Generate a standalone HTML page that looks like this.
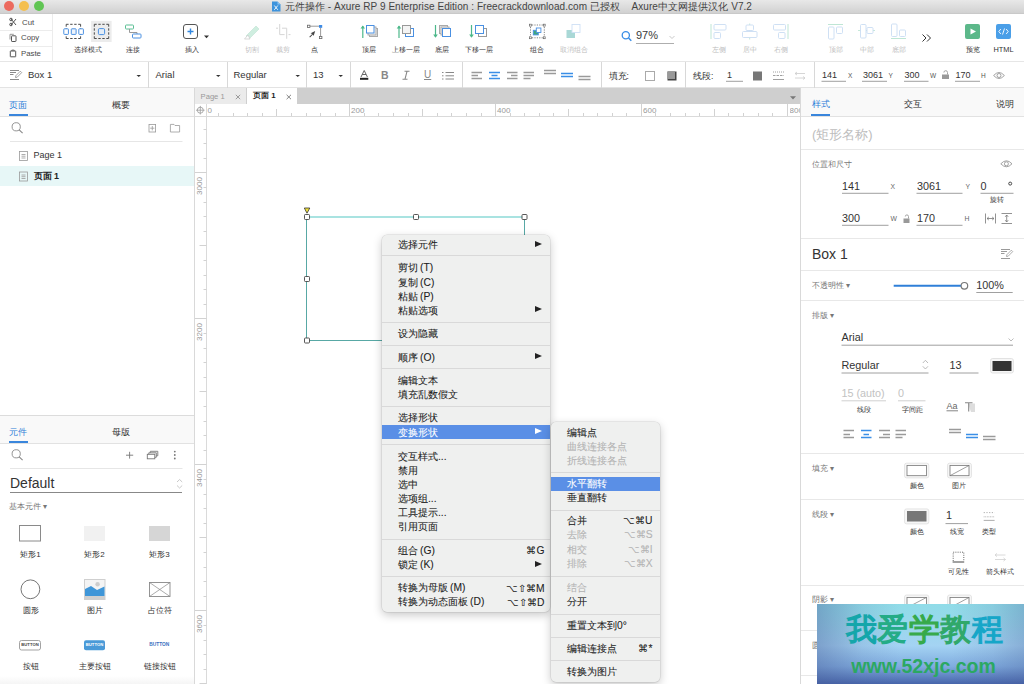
<!DOCTYPE html>
<html><head><meta charset="utf-8">
<style>
*{margin:0;padding:0;box-sizing:border-box}
html,body{width:1024px;height:684px;overflow:hidden;background:#fff}
body{position:relative;font-family:"Liberation Sans",sans-serif;color:#333}
.a{position:absolute}
.t{position:absolute;white-space:nowrap;line-height:1}
.hl{position:absolute;height:1px}
.vl{position:absolute;width:1px}
.lbl{position:absolute;white-space:nowrap;line-height:1;font-size:7.4px;color:#333;transform:translateX(-50%)}
.dis{color:#bdbdbd}
.rn{font-size:10.8px;color:#333}
.rs{font-size:6.8px;color:#666}
.mi{position:absolute;white-space:nowrap;line-height:14px;height:14px;font-size:10.3px;color:#222;-webkit-text-stroke:0.08px currentColor}
.arr{position:absolute;width:0;height:0;border-left:7px solid #222;border-top:3.8px solid transparent;border-bottom:3.8px solid transparent}
</style></head><body>

<!-- TITLE BAR -->
<div class="a" style="left:0;top:0;width:1024px;height:14px;background:linear-gradient(#e8e8e8,#d1d1d1);border-bottom:1px solid #c9c9c9"></div>
<div class="a" style="left:4px;top:1px;width:10px;height:10px;border-radius:50%;background:#ec6a5e"></div>
<div class="a" style="left:19px;top:1px;width:10px;height:10px;border-radius:50%;background:#f4bf4f"></div>
<div class="a" style="left:34px;top:1px;width:10px;height:10px;border-radius:50%;background:#61c554"></div>
<svg class="a" style="left:271px;top:1px" width="10" height="11" viewBox="0 0 10 11"><path d="M1 0.5 H6.5 L9.5 3.5 V10.5 H1 Z" fill="#3d93dc"/><path d="M6.5 0.5 V3.5 H9.5" fill="#8cc2ee"/><path d="M3.3 4.5 L6.8 8.8 M6.8 4.5 L3.3 8.8" stroke="#fff" stroke-width="0.9"/></svg>
<div class="t" style="left:284.7px;top:1.5px;font-size:10px;letter-spacing:0.06px;color:#444">元件操作 - Axure RP 9 Enterprise Edition : Freecrackdownload.com 已授权 &nbsp; &nbsp;Axure中文网提供汉化 V7.2</div>

<!-- TOOLBAR -->
<div class="a" style="left:0;top:14px;width:1024px;height:48px;background:#fff;border-bottom:1px solid #e6e6e6"></div>
<div class="vl" style="left:52px;top:14px;height:48px;background:#ececec"></div>
<div class="hl" style="left:0;top:30px;width:52px;background:#ececec"></div>
<div class="hl" style="left:0;top:46px;width:52px;background:#ececec"></div>
<div class="t" style="left:22px;top:18.5px;font-size:7.8px;color:#4a4a4a">Cut</div>
<div class="t" style="left:21px;top:33.8px;font-size:7.8px;color:#4a4a4a">Copy</div>
<div class="t" style="left:21px;top:50px;font-size:7.8px;color:#4a4a4a">Paste</div>


<!-- toolbar icons -->
<svg class="a" style="left:0;top:0" width="1024" height="90" viewBox="0 0 1024 90" fill="none">
 <!-- scissors -->
 <g stroke="#555" stroke-width="1">
  <path d="M11 19 L16 25 M16 19 L11 25"/>
  <circle cx="11" cy="24.5" r="1.3"/><circle cx="11" cy="19.5" r="1.3"/>
 </g>
 <!-- copy -->
 <g stroke="#555" stroke-width="1">
  <rect x="11.5" y="35.8" width="4.5" height="5.7" rx="0.6"/>
  <path d="M10 39.5 V34.3 H13.8" stroke="#999"/>
 </g>
 <!-- paste -->
 <g stroke="#555" stroke-width="1">
  <rect x="10.3" y="51" width="5.4" height="5.8" rx="0.3"/>
  <path d="M11.8 51 v-0.9 h2.4 v0.9" stroke-width="0.8"/>
 </g>
 <!-- select mode 1 -->
 <g stroke="#4a4a4a" stroke-width="1" stroke-dasharray="2.4 1.6">
  <path d="M66.2 24.3 H80.6 M66.2 38.5 H80.6 M66.2 24.3 V38.5 M80.6 24.3 V38.5"/>
 </g>
 <g stroke="#4a90e2" stroke-width="1" fill="#fff">
  <rect x="63.8" y="28.8" width="4.6" height="5.6" rx="0.6"/>
  <rect x="71.3" y="28.8" width="4.8" height="5.6" rx="0.6" fill="#eef4fb"/>
  <rect x="78.8" y="28.8" width="4.6" height="5.6" rx="0.6"/>
 </g>
 <!-- select mode 2 selected -->
 <rect x="91.1" y="20.9" width="20.5" height="21.1" fill="#ececec"/>
 <g stroke="#4a4a4a" stroke-width="1" stroke-dasharray="2.4 1.6">
  <path d="M94.3 24.3 H108.7 M94.3 38.5 H108.7 M94.3 24.3 V38.5 M108.7 24.3 V38.5"/>
 </g>
 <rect x="98.4" y="28.6" width="6.2" height="6" rx="1.2" stroke="#4a90e2" fill="#e3ecf6"/>
 <!-- connect -->
 <rect x="125.5" y="25" width="8" height="4" rx="0.8" stroke="#5bbf94" fill="#fff"/>
 <path d="M129.5 29 V32.5 H137 V34" stroke="#999"/>
 <rect x="132.5" y="34" width="8.5" height="4" rx="0.8" stroke="#4a90e2" fill="#fff"/>
 <!-- insert -->
 <rect x="183.5" y="24.5" width="14" height="14" rx="2.5" stroke="#555"/>
 <path d="M190.5 28.5 v6 M187.5 31.5 h6" stroke="#2f86e0" stroke-width="1.4"/>
 <path d="M204 35.5 h5 l-2.5 2.8 z" fill="#333"/>
 <!-- cut (knife) disabled -->
 <path d="M246 36 L256 26 L259 29 L249 39 Z" fill="#cfeee0" stroke="#bfe3d2" stroke-width="0.6"/>
 <path d="M244.5 39 L248 35 L250 39 Z" fill="#fff" stroke="#c9c9c9" stroke-width="0.7"/>
 <!-- crop disabled -->
 <path d="M279.7 24 V34.6 H284.6 M282 28.2 H286.7 V38.8 M276 28.2 H278 M288.5 34.6 H290.5" stroke="#d6d6d6" stroke-width="1"/>
 <!-- point -->
 <path d="M309.5 26.2 H319.5 M320.6 27.5 V36.5" stroke="#9a9a9a" stroke-width="1"/>
 <rect x="307.5" y="25.2" width="2.4" height="2.2" fill="#fff" stroke="#666" stroke-width="0.8"/>
 <rect x="319" y="25" width="3.2" height="2.8" fill="#3d8be6"/>
 <rect x="319.4" y="36.4" width="2.5" height="2.2" fill="#fff" stroke="#666" stroke-width="0.8"/>
 <path d="M315.2 31 L310.6 33.2 L312.2 34 L309.3 36.8 L310 37.4 L312.9 34.6 L313.6 36 Z" fill="#444"/>
 <!-- top layer -->
 <g stroke-width="1">
  <path d="M362.8 26 V38" stroke="#4cb88a" stroke-width="1.2"/><path d="M360.5 28.5 L362.8 25.5 L365 28.5 Z" fill="#4cb88a"/>
  <rect x="369.5" y="28.5" width="8" height="8" stroke="#aaa" fill="#eee"/>
  <rect x="368" y="27" width="8" height="8" stroke="#aaa" fill="#f2f2f2"/>
  <rect x="366.5" y="25.5" width="7.5" height="7.5" stroke="#4a90e2" fill="#fff"/>
 </g>
 <!-- up one -->
 <g stroke-width="1">
  <path d="M399 26 V38" stroke="#4cb88a" stroke-width="1.2"/><path d="M396.7 28.5 L399 25.5 L401.3 28.5 Z" fill="#4cb88a"/>
  <rect x="405.5" y="28.5" width="8" height="8" stroke="#4a90e2" fill="#fff"/>
  <rect x="402.5" y="25.5" width="8" height="8" stroke="#999" fill="#f4f4f4"/>
 </g>
 <!-- bottom layer -->
 <g stroke-width="1">
  <path d="M435.5 25 V37" stroke="#4cb88a" stroke-width="1.2"/><path d="M433.2 34.5 L435.5 37.8 L437.8 34.5 Z" fill="#4cb88a"/>
  <rect x="439.5" y="25.5" width="8" height="8" stroke="#aaa" fill="#eee"/>
  <rect x="441" y="27" width="8" height="8" stroke="#aaa" fill="#f2f2f2"/>
  <rect x="442.5" y="28.5" width="8" height="8" stroke="#4a90e2" fill="#fff"/>
 </g>
 <!-- down one -->
 <g stroke-width="1">
  <path d="M471.5 25 V37" stroke="#4cb88a" stroke-width="1.2"/><path d="M469.2 34.5 L471.5 37.8 L473.8 34.5 Z" fill="#4cb88a"/>
  <rect x="478.5" y="28.5" width="8" height="8" stroke="#999" fill="#fff"/>
  <rect x="475.5" y="25.5" width="8" height="8" stroke="#4a90e2" fill="#fff"/>
 </g>
 <!-- group -->
 <path d="M532 25 H543 M532 37.8 H543 M530.5 27 V36 M544.3 27 V36" stroke="#666" stroke-width="0.8" stroke-dasharray="1.2 1.2"/>
 <g fill="#fff" stroke="#666" stroke-width="0.7">
  <rect x="529.6" y="24.2" width="1.9" height="1.9"/><rect x="543.3" y="24.2" width="1.9" height="1.9"/>
  <rect x="529.6" y="36.8" width="1.9" height="1.9"/><rect x="543.3" y="36.8" width="1.9" height="1.9"/>
 </g>
 <rect x="533.3" y="30.3" width="5" height="4.6" fill="#3fa77a" stroke="#4a90e2" stroke-width="0.9"/>
 <rect x="536.3" y="28" width="4.6" height="4.5" fill="#fff" stroke="#4a90e2" stroke-width="0.9"/>
 <!-- ungroup disabled -->
 <rect x="566.5" y="30" width="8.5" height="8" fill="#a9d8d6"/>
 <rect x="572" y="24.5" width="8" height="8" fill="#fff" stroke="#cfe0f5" stroke-width="0.9"/>
 <!-- zoom -->
 <circle cx="625.8" cy="35.3" r="3.6" stroke="#3a8ee6" stroke-width="1.3"/>
 <path d="M628.5 38 L631.3 40.8" stroke="#3a8ee6" stroke-width="1.5"/>
 <path d="M636 43.5 H674" stroke="#999" stroke-width="0.8"/>
 <path d="M669.5 36 L672 38.5 L674.5 36" stroke="#bbb" stroke-width="0.8"/>
 <!-- align left disabled -->
 <g stroke="#c9dcf3" stroke-width="0.9">
  <path d="M711 24 V39" stroke="#bfe6d5" stroke-width="1"/>
  <rect x="714" y="24.5" width="12" height="5.5" rx="1"/><rect x="714" y="32.5" width="6.5" height="6" rx="1"/>
  <path d="M749.7 23.5 V39.5" stroke="#bfe6d5" stroke-width="0.9"/>
  <rect x="746" y="25" width="7.5" height="5.5" rx="1" fill="#fff"/><rect x="742.5" y="31.5" width="14.5" height="6" rx="1" fill="#fff"/>
  <path d="M788 24 V39" stroke="#bfe6d5" stroke-width="1"/>
  <rect x="773.5" y="24.5" width="12" height="5.5" rx="1"/><rect x="778.5" y="32.5" width="6.5" height="6" rx="1"/>
  <path d="M828 24.5 H843" stroke="#bfe6d5" stroke-width="1"/>
  <rect x="828.5" y="27" width="5.5" height="12" rx="1"/><rect x="836.5" y="27" width="6" height="6.5" rx="1"/>
  <path d="M858 30.5 H875" stroke="#bfe6d5" stroke-width="0.9"/>
  <rect x="860.5" y="24.5" width="5.5" height="13.5" rx="1" fill="#fff"/><rect x="867" y="27.5" width="6" height="6" rx="1" fill="#fff"/>
  <path d="M891 38.5 H906" stroke="#bfe6d5" stroke-width="1"/>
  <rect x="891.5" y="24" width="5.5" height="12.5" rx="1"/><rect x="899.5" y="30" width="6" height="6.5" rx="1"/>
 </g>
 <!-- >> -->
 <path d="M922.5 34.5 L926 38 L922.5 41.5 M927 34.5 L930.5 38 L927 41.5" stroke="#333" stroke-width="1"/>
 <!-- preview -->
 <rect x="965" y="24" width="15" height="15" rx="2" fill="#5cb88a"/>
 <path d="M970.5 28.5 L976 31.5 L970.5 34.5 Z" fill="#fff"/>
 <!-- html -->
 <rect x="996" y="24" width="15" height="15" rx="2" fill="#4a9fe8"/>
 <path d="M1000.8 29 L998.8 31.5 L1000.8 34 M1006.2 29 L1008.2 31.5 L1006.2 34 M1004.5 28.5 L1002.5 34.5" stroke="#fff" stroke-width="0.9"/>
</svg>
<div class="lbl" style="left:87.5px;top:46.3px">选择模式</div>
<div class="lbl" style="left:133px;top:46.3px">连接</div>
<div class="lbl" style="left:192.3px;top:46.3px">插入</div>
<div class="lbl dis" style="left:251.5px;top:46.3px">切割</div>
<div class="lbl dis" style="left:283px;top:46.3px">裁剪</div>
<div class="lbl" style="left:314.5px;top:46.3px">点</div>
<div class="lbl" style="left:369px;top:46.3px">顶层</div>
<div class="lbl" style="left:405.5px;top:46.3px">上移一层</div>
<div class="lbl" style="left:441.5px;top:46.3px">底层</div>
<div class="lbl" style="left:478.5px;top:46.3px">下移一层</div>
<div class="lbl" style="left:537px;top:46.3px">组合</div>
<div class="lbl dis" style="left:573.5px;top:46.3px">取消组合</div>
<div class="t" style="left:636px;top:30.3px;font-size:11px;color:#3a3a3a">97%</div>
<div class="lbl dis" style="left:718.5px;top:46.3px">左侧</div>
<div class="lbl dis" style="left:749.5px;top:46.3px">居中</div>
<div class="lbl dis" style="left:781px;top:46.3px">右侧</div>
<div class="lbl dis" style="left:835.5px;top:46.3px">顶部</div>
<div class="lbl dis" style="left:866.5px;top:46.3px">中部</div>
<div class="lbl dis" style="left:898.5px;top:46.3px">底部</div>
<div class="lbl" style="left:972.5px;top:46.3px">预览</div>
<div class="lbl" style="left:1003.5px;top:46.3px">HTML</div>

<!-- FORMAT BAR -->
<div class="a" style="left:0;top:62px;width:1024px;height:26px;background:#fff;border-bottom:1px solid #e3e3e3"></div>


<svg class="a" style="left:0;top:62px" width="1024" height="26" viewBox="0 62 1024 26" fill="none">
 <g stroke="#d8d8d8" stroke-width="1">
  <path d="M148.5 62 V88 M227.5 62 V88 M306.5 62 V88 M350.5 62 V88 M462.5 62 V88 M601.5 62 V88 M685.5 62 V88 M814.5 62 V88"/>
 </g>
 <!-- edit icon -->
 <g stroke="#8a8a8a" stroke-width="1">
  <path d="M10 70.5 H19 M10 72.5 H16 M10 74.5 H13.5 M10 79.5 H19"/>
  <path d="M20.3 71.2 L15.8 75.8 L15.5 77.5 L17.2 77.2 L21.7 72.6 Z" stroke-width="0.8"/>
 </g>
 <g fill="#333">
  <path d="M136.5 75 h4.5 l-2.25 2 z"/>
  <path d="M216 75 h4.5 l-2.25 2 z"/>
  <path d="M295.5 75 h4.5 l-2.25 2 z"/>
  <path d="M338.5 75 h4.5 l-2.25 2 z"/>
 </g>
 <!-- A -->
 <path d="M361 77 L364.2 70.5 L367.4 77 M362.3 74.5 H366" stroke="#555" stroke-width="0.9"/>
 <rect x="360" y="77.8" width="8.3" height="2" fill="#222"/>
 <path d="M404.5 71.3 H409.5 M402.5 79.2 H407.5 M407 71.3 L405 79.2" stroke="#888" stroke-width="1.1"/>
 <!-- list -->
 <g stroke="#888" stroke-width="1">
  <path d="M445.5 72.5 H454 M445.5 75.8 H454 M445.5 79 H454"/>
  <path d="M442 72.5 h1.5 M442 75.8 h1.5 M442 79 h1.5"/>
 </g>
 <!-- align -->
 <g stroke="#9a9a9a" stroke-width="1.3">
  <path d="M471.5 72.5 H482 M471.5 75.5 H478 M471.5 78.5 H482"/>
  <path d="M507 72.5 H517.5 M511 75.5 H517.5 M507 78.5 H517.5"/>
  <path d="M523.5 72.5 H534 M523.5 75.5 H534 M523.5 78.5 H530.5"/>
  <path d="M544 70.5 H556 M544 73.5 H556"/>
  <path d="M578.5 76.5 H590.5 M578.5 79.5 H590.5"/>
 </g>
 <g stroke="#3a8ee6" stroke-width="1.3">
  <path d="M489 72.5 H500 M491.5 75.5 H497.5 M489 78.5 H500"/>
  <path d="M561 73.5 H573 M561 76.5 H573"/>
 </g>
 <!-- fill boxes -->
 <rect x="645.5" y="71.5" width="9" height="9" stroke="#aaa" fill="#fff"/>
 <rect x="667.5" y="71.5" width="9" height="9" fill="#444"/>
 <rect x="667.5" y="71.5" width="7.5" height="7.5" fill="#999"/>
 <path d="M726 81.3 H743" stroke="#888" stroke-width="0.8"/>
 <rect x="753" y="71.5" width="9" height="9" fill="#777"/>
 <g stroke="#888" stroke-width="0.8">
  <path d="M773 72 H784" stroke-dasharray="1 1"/>
  <path d="M773 75.5 H784" stroke-dasharray="2.5 1"/>
  <path d="M773 79.5 H784"/>
 </g>
 <g stroke="#ccc" stroke-width="0.8">
  <path d="M795 73.5 H805 M795 73.5 l2 -1.5 M795 73.5 l2 1.5 M795 78 H805 M805 78 l-2 -1.5 M805 78 l-2 1.5"/>
 </g>
 <g stroke="#888" stroke-width="0.8">
  <path d="M821.5 81.3 H846 M862 81.3 H887 M904 81.3 H928.5 M955 81.3 H980"/>
 </g>
 <!-- lock -->
 <rect x="942" y="74.5" width="7" height="4.5" fill="#999"/>
 <path d="M947.5 74.5 V72.5 a1.8 1.8 0 0 0 -3.6 0" stroke="#999" stroke-width="0.9"/>
 <!-- eye -->
 <path d="M993.6 75.5 Q999 69.5 1004.4 75.5 Q999 81.5 993.6 75.5 Z" stroke="#999" stroke-width="0.9"/>
 <circle cx="999" cy="75.5" r="2" stroke="#999" stroke-width="0.9"/>
</svg>
<div class="t" style="left:28px;top:69.6px;font-size:9.5px;color:#333">Box 1</div>
<div class="t" style="left:155.5px;top:69.8px;font-size:9.5px;color:#333">Arial</div>
<div class="t" style="left:233.5px;top:69.8px;font-size:9.5px;color:#333">Regular</div>
<div class="t" style="left:313px;top:69.8px;font-size:9.5px;color:#333">13</div>
<div class="t" style="left:381px;top:69.5px;font-size:10.5px;font-weight:bold;color:#888">B</div>

<div class="t" style="left:424px;top:69.5px;font-size:10px;color:#888;text-decoration:underline">U</div>
<div class="t" style="left:608.5px;top:71.5px;font-size:8.5px;color:#333">填充:</div>
<div class="t" style="left:693px;top:71.5px;font-size:8.5px;color:#333">线段:</div>
<div class="t" style="left:727px;top:71px;font-size:9px;color:#333">1</div>
<div class="t" style="left:822px;top:71px;font-size:9px;color:#333">141</div>
<div class="t" style="left:848px;top:73px;font-size:6.5px;color:#555">X</div>
<div class="t" style="left:863px;top:71px;font-size:9px;color:#333">3061</div>
<div class="t" style="left:888.5px;top:73px;font-size:6.5px;color:#555">Y</div>
<div class="t" style="left:904.5px;top:71px;font-size:9px;color:#333">300</div>
<div class="t" style="left:930px;top:73px;font-size:6.5px;color:#555">W</div>
<div class="t" style="left:955.5px;top:71px;font-size:9px;color:#333">170</div>
<div class="t" style="left:981px;top:73px;font-size:6.5px;color:#555">H</div>

<!-- LEFT PANEL -->
<div class="a" style="left:0;top:88px;width:194px;height:596px;background:#fff"></div>
<div class="a" style="left:0;top:88px;width:194px;height:29px;background:#f9f9f9;border-bottom:1px solid #e2e2e2"></div>
<div class="vl" style="left:194px;top:88px;height:596px;background:#d9d9d9"></div>
<div class="t" style="left:9px;top:100.5px;font-size:9px;color:#2f7fd8">页面</div>
<div class="a" style="left:9px;top:113.5px;width:19px;height:2px;background:#3a86dc"></div>
<div class="lbl" style="left:121px;top:100.5px;font-size:9px;color:#333">概要</div>
<div class="a" style="left:0;top:166px;width:194px;height:20px;background:#e7f7f7"></div>
<div class="t" style="left:33.5px;top:151px;font-size:9px;color:#333">Page 1</div>
<div class="t" style="left:33.5px;top:172px;font-size:9px;font-weight:bold;color:#222">页面 1</div>
<!-- components panel -->
<div class="a" style="left:0;top:415px;width:194px;height:29px;background:#f9f9f9;border-top:1px solid #dcdcdc;border-bottom:1px solid #e2e2e2"></div>
<div class="t" style="left:9px;top:427.5px;font-size:9px;color:#2f7fd8">元件</div>
<div class="a" style="left:9px;top:440.5px;width:19px;height:2px;background:#3a86dc"></div>
<div class="lbl" style="left:121px;top:427.5px;font-size:9px;color:#333">母版</div>
<div class="t" style="left:10px;top:476px;font-size:14px;color:#333">Default</div>
<div class="t" style="left:9px;top:503px;font-size:7.5px;color:#777">基本元件 ▾</div>
<div class="lbl" style="left:30.5px;top:551px;font-size:8px">矩形1</div>
<div class="lbl" style="left:94.5px;top:551px;font-size:8px">矩形2</div>
<div class="lbl" style="left:159.5px;top:551px;font-size:8px">矩形3</div>
<div class="lbl" style="left:30.5px;top:607px;font-size:8px">圆形</div>
<div class="lbl" style="left:94.5px;top:607px;font-size:8px">图片</div>
<div class="lbl" style="left:159.5px;top:607px;font-size:8px">占位符</div>
<div class="lbl" style="left:30.5px;top:662.5px;font-size:8px">按钮</div>
<div class="lbl" style="left:94.5px;top:662.5px;font-size:8px">主要按钮</div>
<div class="lbl" style="left:159.5px;top:662.5px;font-size:8px">链接按钮</div>
<svg class="a" style="left:0;top:88px" width="194" height="596" viewBox="0 88 194 596" fill="none">
 <g stroke="#888" stroke-width="0.9">
  <circle cx="16.2" cy="126.8" r="4.1"/><path d="M19.2 129.8 L22.6 133.2" stroke-width="1.1"/>
  <circle cx="16.2" cy="453.8" r="4.1"/><path d="M19.2 456.8 L22.6 460.2" stroke-width="1.1"/>
 </g>
 <g stroke="#999" stroke-width="0.8">
  <rect x="149" y="124.4" width="6.6" height="7.6"/><path d="M152.3 126 V130.4 M150.2 128.2 H154.4"/>
  <path d="M170.4 124.4 H174 L175 125.5 H179.6 V132 H170.4 Z"/>
 </g>
 <path d="M10 141.5 H182.5 M10 468.5 H182.5" stroke="#e6e6e6" stroke-width="1"/>
 <g stroke="#999" stroke-width="0.8">
  <rect x="19.5" y="151.4" width="8" height="9"/><path d="M21.5 154.5 H25.5 M21.5 156.2 H25.5 M21.5 158 H25.5"/>
  <rect x="19.5" y="172" width="8" height="9"/><path d="M21.5 175 H25.5 M21.5 176.7 H25.5 M21.5 178.5 H25.5"/>
 </g>
 <g stroke="#777" stroke-width="0.9">
  <path d="M126 455.2 H133.2 M129.6 451.8 V458.6"/>
  <rect x="147.3" y="454.3" width="7.5" height="4.5"/>
  <path d="M148.8 454.3 V452.8 H156.3 V457.3 H154.8 M150.3 452.8 V451.3 H157.8 V455.8 H156.3"/>
 </g>
 <g fill="#777"><circle cx="174.8" cy="451.6" r="0.9"/><circle cx="174.8" cy="455" r="0.9"/><circle cx="174.8" cy="458.5" r="0.9"/></g>
 <path d="M10 492.5 H182" stroke="#888" stroke-width="1"/>
 <path d="M177 482 L179.6 479.5 L182.2 482 M177 485.5 L179.6 488 L182.2 485.5" stroke="#bbb" stroke-width="0.8"/>
 <!-- grid -->
 <rect x="19.5" y="525.5" width="21" height="15.5" stroke="#8a8a8a" stroke-width="1"/>
 <rect x="84" y="526" width="21" height="15" fill="#f1f1f1"/>
 <rect x="149" y="526" width="21" height="15" fill="#d6d6d6"/>
 <circle cx="30.4" cy="589.3" r="9.4" stroke="#666" stroke-width="0.9"/>
 <rect x="84.5" y="579.5" width="20.5" height="20" fill="#f4f4f4" stroke="#cfcfcf" stroke-width="1"/>
 <path d="M85 597 V589 L91 586 L97 590 L104.5 586.5 V597 Z" fill="#3f96d8"/>
 <rect x="85" y="596" width="20" height="3.5" fill="#cfcfcf"/>
 <circle cx="97.6" cy="584.3" r="2.2" fill="#cdcdcd"/>
 <rect x="149.5" y="582.5" width="20.5" height="14" stroke="#888" stroke-width="0.9"/>
 <path d="M149.5 582.5 L170 596.5 M170 582.5 L149.5 596.5" stroke="#888" stroke-width="0.7"/>
 <rect x="19.5" y="640.5" width="21" height="9.5" rx="2" stroke="#999" stroke-width="0.9" fill="#fff"/>
 <rect x="84" y="640.3" width="21" height="10" rx="2" fill="#4a9ad8"/>
</svg>
<div class="a" style="left:0;top:676px;width:194px;height:8px;background:linear-gradient(#fff,#f5f5f5)"></div>
<div class="t" style="left:30px;top:643.2px;font-size:4.2px;font-weight:bold;color:#444;transform:translateX(-50%)">BUTTON</div>
<div class="t" style="left:94.5px;top:643.2px;font-size:4.2px;font-weight:bold;color:#fff;transform:translateX(-50%)">BUTTON</div>
<div class="t" style="left:159.3px;top:642.8px;font-size:4.8px;font-weight:bold;color:#3a6fc0;transform:translateX(-50%)">BUTTON</div>

<!-- CANVAS -->
<div class="a" style="left:195px;top:88px;width:605px;height:16px;background:#cfcfcf"></div>
<div class="a" style="left:195px;top:88px;width:51px;height:16px;background:#ebebeb"></div>
<div class="a" style="left:247px;top:88px;width:50px;height:16px;background:#fff"></div>
<div class="t" style="left:200.6px;top:93px;font-size:7.6px;color:#999">Page 1</div>
<div class="t" style="left:253px;top:92px;font-size:7.8px;font-weight:bold;color:#222">页面 1</div>
<svg class="a" style="left:195px;top:88px" width="605" height="596" viewBox="195 88 605 596" fill="none">
 <path d="M235.8 94.8 L240.2 99.2 M240.2 94.8 L235.8 99.2" stroke="#888" stroke-width="0.8"/>
 <path d="M286.6 94.8 L291 99.2 M291 94.8 L286.6 99.2" stroke="#666" stroke-width="0.8"/>
 <path d="M790 96.2 H796 L793 99.6 Z" fill="#777"/>
 <rect x="195" y="104" width="605" height="12" fill="#fff"/>
 <rect x="195" y="104" width="11.5" height="580" fill="#fff"/>
 <path d="M195 116.5 H800" stroke="#dadada" stroke-width="1"/>
 <path d="M206.5 104 V684" stroke="#dadada" stroke-width="1"/>
 <g stroke="#d2d2d2" stroke-width="1"><path d="M218.5 113 V116 M233.5 113 V116 M247.5 113 V116 M262.5 113 V116 M276.5 109 V116 M291.5 113 V116 M306.5 113 V116 M320.5 113 V116 M335.5 113 V116 M349.5 104 V116 M364.5 113 V116 M378.5 113 V116 M393.5 113 V116 M408.5 113 V116 M422.5 109 V116 M437.5 113 V116 M451.5 113 V116 M466.5 113 V116 M481.5 113 V116 M495.5 104 V116 M510.5 113 V116 M524.5 113 V116 M539.5 113 V116 M553.5 113 V116 M568.5 109 V116 M583.5 113 V116 M597.5 113 V116 M612.5 113 V116 M626.5 113 V116 M641.5 104 V116 M655.5 113 V116 M670.5 113 V116 M685.5 113 V116 M699.5 113 V116 M714.5 109 V116 M728.5 113 V116 M743.5 113 V116 M758.5 113 V116 M772.5 113 V116 M787.5 104 V116"/></g>
 <g stroke="#d2d2d2" stroke-width="1"><path d="M203.5 129.5 H206.5 M203.5 143.5 H206.5 M203.5 158.5 H206.5 M195 172.5 H206.5 M203.5 187.5 H206.5 M203.5 202.5 H206.5 M203.5 216.5 H206.5 M203.5 231.5 H206.5 M199.5 245.5 H206.5 M203.5 260.5 H206.5 M203.5 275.5 H206.5 M203.5 289.5 H206.5 M203.5 304.5 H206.5 M195 318.5 H206.5 M203.5 333.5 H206.5 M203.5 348.5 H206.5 M203.5 362.5 H206.5 M203.5 377.5 H206.5 M199.5 391.5 H206.5 M203.5 406.5 H206.5 M203.5 421.5 H206.5 M203.5 435.5 H206.5 M203.5 450.5 H206.5 M195 464.5 H206.5 M203.5 479.5 H206.5 M203.5 494.5 H206.5 M203.5 508.5 H206.5 M203.5 523.5 H206.5 M199.5 537.5 H206.5 M203.5 552.5 H206.5 M203.5 567.5 H206.5 M203.5 581.5 H206.5 M203.5 596.5 H206.5 M195 610.5 H206.5 M203.5 625.5 H206.5 M203.5 640.5 H206.5 M203.5 654.5 H206.5 M203.5 669.5 H206.5 M199.5 683.5 H206.5"/></g>
 <!-- crosshair -->
 <g stroke="#999" stroke-width="0.8">
  <circle cx="200.3" cy="110.2" r="3"/><path d="M196 110.2 H204.6 M200.3 105.9 V114.5"/>
 </g>
</svg>
<div class="t" style="left:207.5px;top:106.5px;font-size:8px;color:#999">0</div>
<div class="t" style="left:351px;top:106.5px;font-size:8px;color:#999">200</div>
<div class="t" style="left:497px;top:106.5px;font-size:8px;color:#999">400</div>
<div class="t" style="left:643px;top:106.5px;font-size:8px;color:#999">600</div>
<div class="t" style="left:789.5px;top:106.5px;font-size:8px;color:#999;width:10px;overflow:hidden">800</div>
<div class="t" style="left:200px;top:185.5px;font-size:8px;color:#999;transform:translate(-50%,-50%) rotate(-90deg)">3000</div>
<div class="t" style="left:200px;top:331.5px;font-size:8px;color:#999;transform:translate(-50%,-50%) rotate(-90deg)">3200</div>
<div class="t" style="left:200px;top:477.5px;font-size:8px;color:#999;transform:translate(-50%,-50%) rotate(-90deg)">3400</div>
<div class="t" style="left:200px;top:623.5px;font-size:8px;color:#999;transform:translate(-50%,-50%) rotate(-90deg)">3600</div>
<!-- selected rect -->
<svg class="a" style="left:195px;top:117px" width="605" height="567" viewBox="195 117 605 567" fill="none">
 <path d="M306.5 217 V340.5 H524.5 V217" stroke="#58a8a5" stroke-width="1"/>
 <path d="M306.5 217 H524.5" stroke="#a9e3e1" stroke-width="2"/>
 <path d="M304.3 208 H309.8 L307 213.2 Z" fill="#f1e23c" stroke="#333" stroke-width="0.8" stroke-linejoin="round"/>
 <g fill="#fff" stroke="#444" stroke-width="0.9">
  <rect x="304.5" y="214.5" width="5" height="5" rx="0.8"/>
  <rect x="413.5" y="214.5" width="5" height="5" rx="0.8"/>
  <rect x="522" y="214.5" width="5" height="5" rx="0.8"/>
  <rect x="304.5" y="276.5" width="5" height="5" rx="0.8"/>
  <rect x="304.5" y="338" width="5" height="5" rx="0.8"/>
 </g>
</svg>

<!-- CONTEXT MENU -->
<div class="a" style="left:381.7px;top:234.5px;width:168.8px;height:377px;background:#eff0ef;border-radius:5px;box-shadow:0 0 0 0.5px rgba(0,0,0,0.12),0 3px 10px rgba(0,0,0,0.22)"></div>
<div class="mi" style="left:398px;top:237.9px;color:#222">选择元件</div>
<div class="arr" style="left:534.7px;top:240.6px;border-left-color:#222"></div>
<div class="hl" style="left:382px;top:255.3px;width:168px;background:#d9d9d9"></div>
<div class="mi" style="left:398px;top:261.3px;color:#222">剪切&thinsp;(T)</div>
<div class="mi" style="left:398px;top:275.5px;color:#222">复制&thinsp;(C)</div>
<div class="mi" style="left:398px;top:289.5px;color:#222">粘贴&thinsp;(P)</div>
<div class="mi" style="left:398px;top:303.5px;color:#222">粘贴选项</div>
<div class="arr" style="left:534.7px;top:306.2px;border-left-color:#222"></div>
<div class="hl" style="left:382px;top:321.7px;width:168px;background:#d9d9d9"></div>
<div class="mi" style="left:398px;top:327.3px;color:#222">设为隐藏</div>
<div class="hl" style="left:382px;top:344.9px;width:168px;background:#d9d9d9"></div>
<div class="mi" style="left:398px;top:350.5px;color:#222">顺序&thinsp;(O)</div>
<div class="arr" style="left:534.7px;top:353.2px;border-left-color:#222"></div>
<div class="hl" style="left:382px;top:368.4px;width:168px;background:#d9d9d9"></div>
<div class="mi" style="left:398px;top:373.9px;color:#222">编辑文本</div>
<div class="mi" style="left:398px;top:388.0px;color:#222">填充乱数假文</div>
<div class="hl" style="left:382px;top:405.7px;width:168px;background:#d9d9d9"></div>
<div class="mi" style="left:398px;top:411.4px;color:#222">选择形状</div>
<div class="a" style="left:381.7px;top:424.9px;width:168.8px;height:14.4px;background:#5a8fe6"></div>
<div class="mi" style="left:398px;top:425.6px;color:#fff">变换形状</div>
<div class="arr" style="left:534.7px;top:428.3px;border-left-color:#fff"></div>
<div class="hl" style="left:382px;top:443.9px;width:168px;background:#d9d9d9"></div>
<div class="mi" style="left:398px;top:449.6px;color:#222">交互样式...</div>
<div class="mi" style="left:398px;top:463.5px;color:#222">禁用</div>
<div class="mi" style="left:398px;top:477.5px;color:#222">选中</div>
<div class="mi" style="left:398px;top:492.1px;color:#222">选项组...</div>
<div class="mi" style="left:398px;top:506.4px;color:#222">工具提示...</div>
<div class="mi" style="left:398px;top:520.3px;color:#222">引用页面</div>
<div class="hl" style="left:382px;top:538.5px;width:168px;background:#d9d9d9"></div>
<div class="mi" style="left:398px;top:543.9px;color:#222">组合&thinsp;(G)</div>
<div class="mi sc" style="right:479.5px;top:544.4px">⌘G</div>
<div class="mi" style="left:398px;top:558.1px;color:#222">锁定&thinsp;(K)</div>
<div class="arr" style="left:534.7px;top:560.8px;border-left-color:#222"></div>
<div class="hl" style="left:382px;top:575.8px;width:168px;background:#d9d9d9"></div>
<div class="mi" style="left:398px;top:581.2px;color:#222">转换为母版&thinsp;(M)</div>
<div class="mi sc" style="right:479.5px;top:581.7px">⌥⇧⌘M</div>
<div class="mi" style="left:398px;top:595.0px;color:#222">转换为动态面板&thinsp;(D)</div>
<div class="mi sc" style="right:479.5px;top:595.5px">⌥⇧⌘D</div>
<!-- SUBMENU -->
<div class="a" style="left:551px;top:422.3px;width:108.5px;height:259.5px;background:#eff0ef;border-radius:5px;box-shadow:0 0 0 0.5px rgba(0,0,0,0.12),0 3px 10px rgba(0,0,0,0.22)"></div>
<div class="mi" style="left:567px;top:425.5px;color:#222">编辑点</div>
<div class="mi" style="left:567px;top:439.8px;color:#b3b3b3">曲线连接各点</div>
<div class="mi" style="left:567px;top:453.8px;color:#b3b3b3">折线连接各点</div>
<div class="hl" style="left:551px;top:472.2px;width:108.5px;background:#d9d9d9"></div>
<div class="a" style="left:551px;top:477.1px;width:108.5px;height:14.2px;background:#5a8fe6"></div>
<div class="mi" style="left:567px;top:477.2px;color:#fff">水平翻转</div>
<div class="mi" style="left:567px;top:491.4px;color:#222">垂直翻转</div>
<div class="hl" style="left:551px;top:510.1px;width:108.5px;background:#d9d9d9"></div>
<div class="mi" style="left:567px;top:514.2px;color:#222">合并</div>
<div class="mi sc" style="right:371.5px;top:514.2px;color:#222">⌥⌘U</div>
<div class="mi" style="left:567px;top:528.4px;color:#b3b3b3">去除</div>
<div class="mi sc" style="right:371.5px;top:528.4px;color:#b3b3b3">⌥⌘S</div>
<div class="mi" style="left:567px;top:542.9px;color:#b3b3b3">相交</div>
<div class="mi sc" style="right:371.5px;top:542.9px;color:#b3b3b3">⌥⌘I</div>
<div class="mi" style="left:567px;top:557.1px;color:#b3b3b3">排除</div>
<div class="mi sc" style="right:371.5px;top:557.1px;color:#b3b3b3">⌥⌘X</div>
<div class="hl" style="left:551px;top:575.8px;width:108.5px;background:#d9d9d9"></div>
<div class="mi" style="left:567px;top:580.6px;color:#b3b3b3">结合</div>
<div class="mi" style="left:567px;top:595.0px;color:#222">分开</div>
<div class="hl" style="left:551px;top:613.6px;width:108.5px;background:#d9d9d9"></div>
<div class="mi" style="left:567px;top:618.6px;color:#222">重置文本到0°</div>
<div class="hl" style="left:551px;top:637.0px;width:108.5px;background:#d9d9d9"></div>
<div class="mi" style="left:567px;top:641.8px;color:#222">编辑连接点</div>
<div class="mi sc" style="right:371.5px;top:641.8px;color:#222">⌘*</div>
<div class="hl" style="left:551px;top:659.9px;width:108.5px;background:#d9d9d9"></div>
<div class="mi" style="left:567px;top:665.2px;color:#222">转换为图片</div>

<!-- RIGHT PANEL -->
<div class="a" style="left:801px;top:88px;width:223px;height:596px;background:#fff"></div>
<div class="vl" style="left:800px;top:88px;height:596px;background:#d9d9d9"></div>
<div class="a" style="left:801px;top:88px;width:223px;height:29px;background:#f9f9f9;border-bottom:1px solid #e2e2e2"></div>
<div class="t" style="left:812px;top:100.3px;font-size:9px;color:#2f7fd8">样式</div>
<div class="a" style="left:811px;top:113.5px;width:19px;height:2px;background:#3a86dc"></div>
<div class="lbl" style="left:913px;top:100.3px;font-size:9px">交互</div>
<div class="lbl" style="left:1005px;top:100.3px;font-size:9px">说明</div>
<div class="t" style="left:812px;top:127.5px;font-size:13px;color:#bdbdbd">(矩形名称)</div>
<div class="t" style="left:812.3px;top:160.5px;font-size:7.6px;color:#777">位置和尺寸</div>
<div class="t rn" style="left:842px;top:180.7px">141</div>
<div class="t rs" style="left:890.5px;top:183.5px">X</div>
<div class="t rn" style="left:917px;top:180.7px">3061</div>
<div class="t rs" style="left:965.5px;top:183.5px">Y</div>
<div class="t rn" style="left:980.5px;top:180.7px">0</div>

<div class="lbl" style="left:997px;top:196.5px;font-size:6.5px">旋转</div>
<div class="t rn" style="left:842px;top:213px">300</div>
<div class="t rs" style="left:890.5px;top:215.5px">W</div>
<div class="t rn" style="left:917px;top:213px">170</div>
<div class="t rs" style="left:964.5px;top:215.5px">H</div>
<div class="t" style="left:812px;top:247.3px;font-size:14px;color:#333">Box 1</div>
<div class="t" style="left:812px;top:282px;font-size:7.5px;color:#777">不透明性 ▾</div>
<div class="t rn" style="left:976.3px;top:280.3px">100%</div>
<div class="t" style="left:812px;top:312.2px;font-size:7.5px;color:#777">排版 ▾</div>
<div class="t rn" style="left:841.5px;top:332.3px">Arial</div>
<div class="t rn" style="left:841.5px;top:360.2px">Regular</div>
<div class="t rn" style="left:949.5px;top:360.2px">13</div>
<div class="t rn" style="left:841.5px;top:388.2px;color:#c2c2c2">15 (auto)</div>
<div class="t rn" style="left:898px;top:388.2px;color:#c2c2c2">0</div>
<div class="lbl" style="left:864px;top:405.5px;font-size:7px">线段</div>
<div class="lbl" style="left:912px;top:405.5px;font-size:7px">字间距</div>
<div class="t" style="left:812px;top:465px;font-size:7.5px;color:#777">填充 ▾</div>
<div class="lbl" style="left:916.6px;top:482px;font-size:7px">颜色</div>
<div class="lbl" style="left:959.3px;top:482px;font-size:7px">图片</div>
<div class="t" style="left:812px;top:510.5px;font-size:7.5px;color:#777">线段 ▾</div>
<div class="t rn" style="left:946px;top:510.3px">1</div>
<div class="lbl" style="left:916.6px;top:527.8px;font-size:7px">颜色</div>
<div class="lbl" style="left:957.3px;top:527.8px;font-size:7px">线宽</div>
<div class="lbl" style="left:989.3px;top:527.8px;font-size:7px">类型</div>
<div class="lbl" style="left:958px;top:568.3px;font-size:7px">可见性</div>
<div class="lbl" style="left:1000.3px;top:568.3px;font-size:7px">箭头样式</div>
<div class="t" style="left:812px;top:596.3px;font-size:7.5px;color:#777">阴影 ▾</div>
<div class="t" style="left:812px;top:641.5px;font-size:7.5px;color:#777">圆角</div>
<svg class="a" style="left:801px;top:117px" width="223" height="567" viewBox="801 117 223 567" fill="none">
 <g stroke="#e8e8e8" stroke-width="1">
  <path d="M801 149.5 H1024 M801 238.5 H1024 M801 270.5 H1024 M801 300.5 H1024 M801 453.5 H1024 M801 499.5 H1024 M801 585.5 H1024 M801 630.5 H1024 M801 675.5 H1024"/>
 </g>
 <!-- eye -->
 <path d="M1000.8 163.8 Q1006.4 157.8 1012 163.8 Q1006.4 169.8 1000.8 163.8 Z" stroke="#999" stroke-width="0.9"/>
 <circle cx="1006.4" cy="163.8" r="2" stroke="#999" stroke-width="0.9"/>
 <g stroke="#888" stroke-width="0.8">
  <path d="M842 193.3 H888.5 M916.5 193.3 H962.5 M980.5 193.3 H1013.5"/>
  <path d="M842 225.3 H888.5 M916.5 225.3 H962.5"/>
  <path d="M976.3 292.5 H1012.7"/>
  <path d="M841.5 345.2 H1013 M841.5 373 H928.5 M949.5 373 H978.5"/>
  <path d="M945.5 523.6 H968"/>
 </g>
 <path d="M841.5 400.8 H886 M898 400.8 H925.5" stroke="#d0d0d0" stroke-width="1"/>
 <circle cx="1010.2" cy="183.6" r="1.5" stroke="#444" stroke-width="1"/>
 <!-- lock -->
 <rect x="903.5" y="218.5" width="6" height="4.5" fill="#999"/>
 <path d="M908.5 218.5 V216.5 a1.6 1.6 0 0 0 -3.2 0" stroke="#999" stroke-width="0.9"/>
 <!-- width/height icons -->
 <g stroke="#777" stroke-width="0.8">
  <path d="M985.5 213.5 V223.5 M995.5 213.5 V223.5 M987 218.5 H994 M987 218.5 l1.8 -1.5 M987 218.5 l1.8 1.5 M994 218.5 l-1.8 -1.5 M994 218.5 l-1.8 1.5"/>
  <path d="M1001.5 213.5 H1012 M1001.5 223.5 H1012 M1006.7 215 V222 M1006.7 215 l-1.5 1.8 M1006.7 215 l1.5 1.8 M1006.7 222 l-1.5 -1.8 M1006.7 222 l1.5 -1.8"/>
 </g>
 <!-- edit icon -->
 <g stroke="#9a9a9a" stroke-width="1">
  <path d="M1001 249.5 H1010 M1001 251.5 H1007 M1001 253.5 H1004.5 M1001 258.5 H1010"/>
  <path d="M1011.3 250.2 L1006.8 254.8 L1006.5 256.5 L1008.2 256.2 L1012.7 251.6 Z" stroke-width="0.8"/>
 </g>
 <!-- slider -->
 <path d="M893.7 285.8 H961" stroke="#2f7fd8" stroke-width="2"/>
 <circle cx="964.4" cy="285.8" r="3.3" fill="#fff" stroke="#777" stroke-width="1.2"/>
 <!-- chevrons -->
 <path d="M1008.6 338.5 L1011 341 L1013.5 338.5" stroke="#aaa" stroke-width="0.8"/>
 <path d="M922.8 363 L925.4 360.3 L928 363 M922.8 366.3 L925.4 369 L928 366.3" stroke="#aaa" stroke-width="0.8"/>
 <!-- color swatch -->
 <rect x="990.6" y="358.5" width="22.8" height="14.5" rx="2" fill="#f6f6f6" stroke="#dcdcdc" stroke-width="0.8"/>
 <rect x="992.5" y="361" width="19" height="10" fill="#333"/>
 <!-- Aa T -->
 <path d="M946.5 410.8 H958" stroke="#777" stroke-width="0.9"/>
 <path d="M968 403.5 H975 V412 H971 Z" fill="#ddd"/>
 <path d="M965 402.8 H972.5 M968.7 402.8 V411.5" stroke="#888" stroke-width="1.1"/>
 <!-- align -->
 <g stroke="#9a9a9a" stroke-width="1.3">
  <path d="M843.5 430.5 H854 M843.5 434.5 H850 M843.5 437.5 H854"/>
  <path d="M879 430.5 H890 M883 434.5 H890 M879 437.5 H890"/>
  <path d="M895.5 430.5 H906 M895.5 434.5 H906 M895.5 437.5 H902.5"/>
  <path d="M949 429.5 H961 M949 432.5 H961"/>
  <path d="M983 436.5 H995.5 M983 439.5 H995.5"/>
 </g>
 <g stroke="#3a8ee6" stroke-width="1.3">
  <path d="M861 430.5 H871.5 M863.5 434.5 H869 M861 437.5 H871.5"/>
  <path d="M966 434.5 H978 M966 437.5 H978"/>
 </g>
 <!-- fill boxes -->
 <rect x="904.5" y="463.2" width="24.3" height="14.7" rx="2" fill="#f6f6f6" stroke="#e0e0e0" stroke-width="0.8"/>
 <rect x="907" y="465.5" width="19.4" height="10.2" fill="#fff" stroke="#777" stroke-width="0.8"/>
 <rect x="947.5" y="463.2" width="24" height="14.7" rx="2" fill="#f6f6f6" stroke="#e0e0e0" stroke-width="0.8"/>
 <rect x="950" y="465.5" width="19" height="10.2" fill="#fff" stroke="#777" stroke-width="0.8"/>
 <path d="M950 475.7 L969 465.5" stroke="#777" stroke-width="0.7"/>
 <rect x="904.5" y="508.9" width="24.3" height="15" rx="2" fill="#f6f6f6" stroke="#e0e0e0" stroke-width="0.8"/>
 <rect x="907" y="511" width="19.5" height="10.5" fill="#777"/>
 <g stroke="#999" stroke-width="0.8">
  <path d="M983.7 512.6 H994.6" stroke-dasharray="1.2 1.5"/>
  <path d="M983.7 516.8 H994.6" stroke-dasharray="0.8 0.8"/>
  <path d="M983.7 520.4 H994.6"/>
 </g>
 <!-- visibility -->
 <path d="M953.2 561 V552.2 H963.8 V561" stroke="#555" stroke-width="0.9" stroke-dasharray="1 1.2"/>
 <path d="M952.6 562 H964.2" stroke="#555" stroke-width="1.1"/>
 <!-- arrows -->
 <g stroke="#d0d0d0" stroke-width="0.8">
  <path d="M995 555 H1005.5 M995 555 l2 -1.6 M995 555 l2 1.6 M995 559.5 H1005.5 M1005.5 559.5 l-2 -1.6 M1005.5 559.5 l-2 1.6"/>
 </g>
 <!-- shadow boxes -->
 <rect x="904.5" y="595" width="24.3" height="15" rx="2" fill="#f6f6f6" stroke="#e0e0e0" stroke-width="0.8"/>
 <rect x="907" y="597.5" width="19.4" height="10.2" fill="#fff" stroke="#777" stroke-width="0.8"/>
 <path d="M907 607.7 L926.4 597.5" stroke="#777" stroke-width="0.7"/>
 <rect x="947.5" y="595" width="24" height="15" rx="2" fill="#f6f6f6" stroke="#e0e0e0" stroke-width="0.8"/>
 <rect x="950" y="597.5" width="19" height="10.2" fill="#fff" stroke="#777" stroke-width="0.8"/>
 <path d="M950 607.7 L969 597.5" stroke="#777" stroke-width="0.7"/>
</svg>
<div class="t" style="left:946.5px;top:401.5px;font-size:9px;color:#666">Aa</div>

<!-- WATERMARK -->
<div class="a" style="left:817px;top:604px;width:207px;height:80px;background:linear-gradient(to bottom,#90dce8 0%,#99d8ec 25%,#a4d3f3 52%,#80acdf 78%,#4765ab 100%)"></div>
<div class="a" style="left:817px;top:604px;width:207px;height:80px;background:linear-gradient(90deg,rgba(70,90,150,0.42) 0%,rgba(70,90,150,0.12) 22%,rgba(70,90,150,0) 40%,rgba(70,90,150,0) 65%,rgba(70,90,150,0.12) 85%,rgba(70,90,150,0.3) 100%)"></div>
<div class="t" style="left:846px;top:614px;font-size:30.5px;letter-spacing:0.4px;-webkit-text-stroke:1.3px currentColor"><span style="color:#14a6aa">我</span><span style="color:#24ac86">爱</span><span style="color:#36aa4a">学</span><span style="color:#30a86a">教</span><span style="color:#16a6c8">程</span></div>
<div class="t" style="left:851.3px;top:656.5px;font-size:19.5px;font-weight:bold;color:#2ba862">www.52xjc.com</div>
</body></html>
